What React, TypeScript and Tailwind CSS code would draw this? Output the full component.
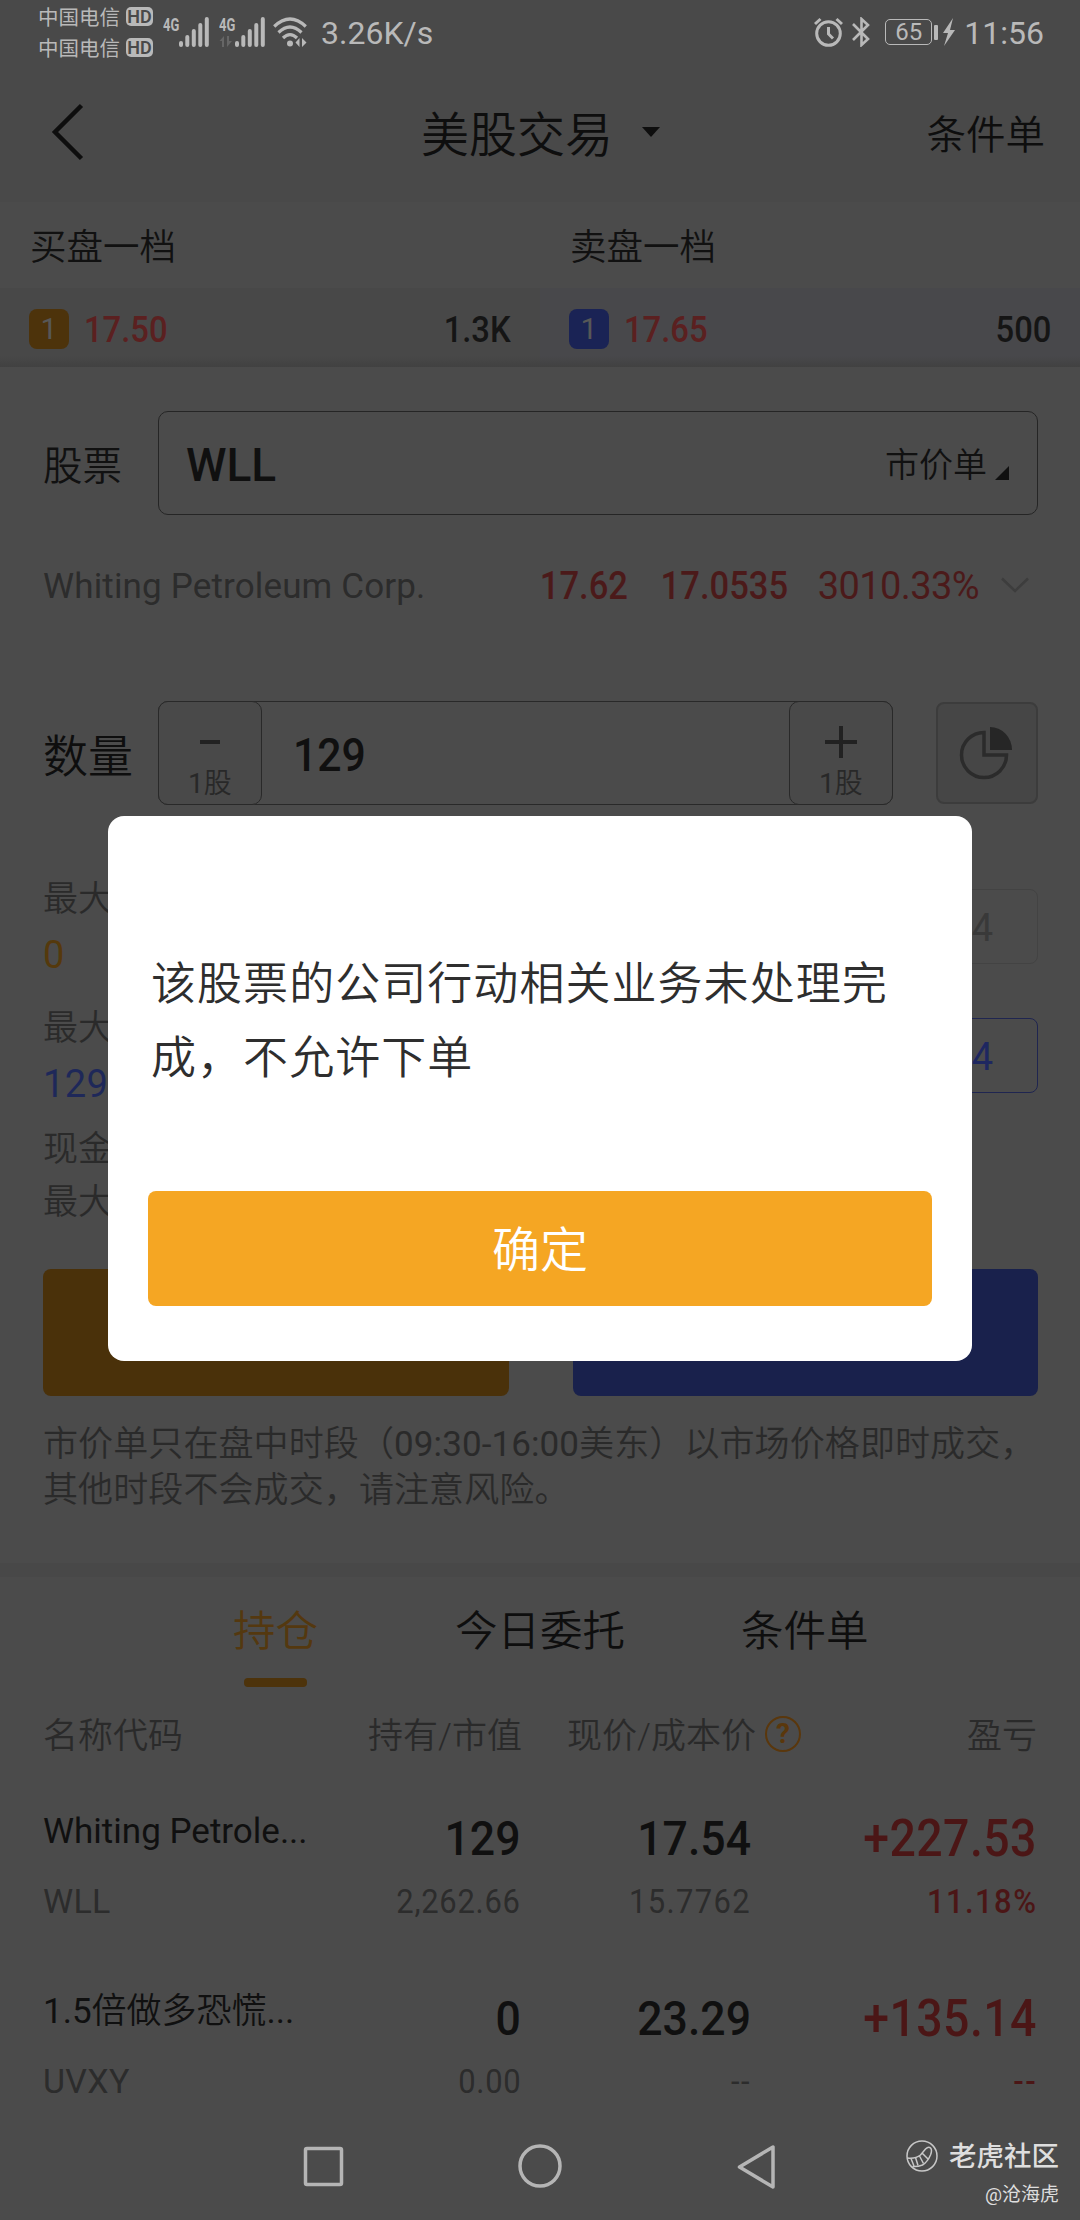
import type { ReactNode } from 'react';

interface Quote {
  title: string;
  price: string;
  size: string;
  badge: string;
  row: string;
}

interface Position {
  latin: string;
  name: string;
  code: string;
  amount: string;
  value: string;
  price: string;
  cost: string;
  profit: string;
  percent: string;
}

const quotes: Quote[] = [
  { title: '买盘一档', price: '17.50', size: '1.3K', badge: 'bg-[#4d330b]', row: 'bg-[#484848]' },
  { title: '卖盘一档', price: '17.65', size: '500', badge: 'bg-[#1a2355]', row: 'bg-[#48484b]' },
];

const positions: Position[] = [
  {
    latin: 'Whiting Petrole',
    name: '',
    code: 'WLL',
    amount: '129',
    value: '2,262.66',
    price: '17.54',
    cost: '15.7762',
    profit: '+227.53',
    percent: '11.18%',
  },
  {
    latin: '1.5',
    name: '倍做多恐慌',
    code: 'UVXY',
    amount: '0',
    value: '0.00',
    price: '23.29',
    cost: '--',
    profit: '+135.14',
    percent: '--',
  },
];

// condensed digits, anchored on the left or on the right
const Num = ({ children, right, className = '' }: { children: ReactNode; right?: boolean; className?: string }) => (
  <span className={`inline-block whitespace-nowrap scale-x-[0.91] ${right ? 'origin-right' : 'origin-left'} ${className}`}>
    {children}
  </span>
);

const Carrier = () => (
  <div className="flex h-[31px] items-center gap-[6px]">
    <span className="pt-[3px] text-[20.5px] leading-none">中国电信</span>
    <span className="flex h-[19px] w-[27px] items-center justify-center rounded-[5px] bg-[#b9b9b9] text-[18px] leading-none font-semibold text-[#494949]">
      HD
    </span>
  </div>
);

const Signal = ({ data }: { data?: boolean }) => (
  <div className="relative h-[30px] w-[46px]">
    <span className="absolute top-0 left-0 origin-left scale-x-[0.72] text-[18px] leading-[15px] font-bold">4G</span>
    <svg className="absolute inset-0" width="46" height="30" viewBox="0 0 46 30" fill="#b9b9b9">
      <rect x="16" y="24" width="4" height="6" rx="2" />
      <rect x="22.3" y="18" width="4" height="12" rx="2" />
      <rect x="28.8" y="12" width="4" height="18" rx="2" />
      <rect x="35.3" y="6" width="4" height="24" rx="2" />
      <rect x="41.8" y="0" width="4" height="30" rx="2" />
      {data && (
        <g fill="#666">
          <path d="M5 19v11H3v-6H0.500z" />
          <path d="M8 19v11l5-6h-3v-5z" />
        </g>
      )}
    </svg>
  </div>
);

const StatusBar = () => (
  <div className="flex h-[64px] items-center justify-between pr-[37px] pl-[38px] font-normal text-[#b9b9b9]">
    <div className="flex items-center">
      <div className="mr-[10px] flex flex-col">
        <Carrier />
        <Carrier />
      </div>
      <div className="mr-[10px]">
        <Signal />
      </div>
      <div className="mr-[8px]">
        <Signal data />
      </div>
      <svg className="mr-[14px]" width="34" height="30" viewBox="0 0 34 30" fill="none" stroke="#b9b9b9" strokeWidth="3.2">
        <path d="M1.200 9.500Q17-5.500 32.800 9.500" />
        <path d="M5.500 15.500Q17 4.500 28.500 15.500" />
        <path d="M10 21Q17 14 24 21" />
        <circle cx="17" cy="26.500" r="3" fill="#b9b9b9" stroke="none" />
        <path d="M26.500 21v9l-4-4.500zM29 21v9l4.500-4.500z" fill="#b9b9b9" stroke="none" />
      </svg>
      <span className="pt-px text-[32px] leading-none">3.26K/s</span>
    </div>
    <div className="flex items-center">
      <svg className="mr-[9px]" width="29" height="30" viewBox="0 0 29 30" fill="none" stroke="#b9b9b9" strokeWidth="3">
        <circle cx="14.500" cy="16.500" r="11.800" />
        <path d="M14.500 10v7l4.500 4.500" />
        <path d="M1 7l5.500-5M28 7l-5.500-5" />
      </svg>
      <svg className="mr-[14px]" width="19" height="30" viewBox="0 0 19 30" fill="none" stroke="#b9b9b9" strokeWidth="2.6">
        <path d="M1 7l15 15-6.500 6V2L16 8 1 23" />
      </svg>
      <div className="flex h-[26px] w-[47px] items-center justify-center rounded-[5px] border-[1.5px] border-[#b9b9b9] text-[24px] leading-none">
        65
      </div>
      <div className="mr-[5px] ml-[2px] h-[15px] w-[4px] rounded-[1px] bg-[#b9b9b9]" />
      <svg className="mr-[9px]" width="12" height="28" viewBox="0 0 12 28" fill="#b9b9b9">
        <path d="M10 0L0 15h5L1 28l11-16H7z" />
      </svg>
      <span className="-mr-px pt-px text-[32px] leading-none">11:56</span>
    </div>
  </div>
);

const Header = () => (
  <div className="grid h-[138px] grid-cols-3 items-center text-[#0e0e0e]">
    <svg className="-mt-[2px] ml-[51px]" width="33" height="58" viewBox="0 0 33 58" fill="none" stroke="#0e0e0e" strokeWidth="4.500">
      <path d="M30.500 2.500L4 29l26.500 26.500" />
    </svg>
    <div className="flex items-center pl-[61px]">
      <span className="pt-[5px] text-[48px] leading-none whitespace-nowrap">美股交易</span>
      <svg className="-mt-[3px] ml-[29px] shrink-0" width="18" height="10" viewBox="0 0 18 10" fill="#0e0e0e">
        <path d="M0 0h18L9 10z" />
      </svg>
    </div>
    <span className="pt-[5px] pr-[35px] text-right text-[39.500px] leading-none">条件单</span>
  </div>
);

const Quotes = () => (
  <div className="relative grid grid-cols-2">
    {quotes.map(q => (
      <div key={q.title}>
        <div className="flex h-[86px] items-center pt-[7px] pl-[30px] text-[36.500px] leading-none text-[#111]">{q.title}</div>
        <div className={`flex h-[79px] items-start pt-[21px] pr-[29px] pl-[29px] text-[36px] leading-[42px] font-medium ${q.row}`}>
          <span className={`flex h-[40px] w-[40px] items-center justify-center rounded-[8px] text-[30px] font-normal text-[#575757] ${q.badge}`}>
            1
          </span>
          <Num className="ml-[15px] text-[#5b2020]">{q.price}</Num>
          <Num right className="ml-auto text-[#151515]">
            {q.size}
          </Num>
        </div>
      </div>
    ))}
    <div className="absolute inset-x-0 bottom-0 h-[11px] bg-linear-to-b from-transparent to-[#414141]" />
  </div>
);

const StockRow = () => (
  <div className="mt-[44px] flex h-[104px] items-center pr-[42px] pl-[43px]">
    <span className="w-[115px] pt-[8px] text-[39.500px] leading-none text-[#111]">股票</span>
    <div className="flex h-full flex-1 items-center rounded-[10px] border border-[#252525] pr-[28px] pl-[27px]">
      <span className="pt-[3px] text-[46px] leading-none font-medium text-[#101010]">WLL</span>
      <span className="ml-auto pt-[4px] text-[34px] leading-none text-[#111]">市价单</span>
      <svg className="mt-[20px] ml-[8px]" width="14" height="14" viewBox="0 0 14 14" fill="#101010">
        <path d="M14 0v14H0z" />
      </svg>
    </div>
  </div>
);

const NameRow = () => (
  <div className="flex h-[142px] items-center pr-[51px] pl-[43px] font-normal text-[#4b1a1a]">
    <span className="text-[35px] leading-none tracking-[0.150px] whitespace-nowrap text-[#2c2c2c]">Whiting Petroleum Corp.</span>
    <div className="ml-auto flex items-center text-[38px] leading-none">
      <Num right className="font-medium">
        17.62
      </Num>
      <Num right className="ml-[20px] font-medium">
        17.0535
      </Num>
      <span className="ml-[30px] tracking-[-0.6px]">3010.33%</span>
      <svg className="-mt-[3px] ml-[22px]" width="28" height="16" viewBox="0 0 28 16" fill="none" stroke="#3d3d3d" strokeWidth="2.500">
        <path d="M1 1.500l13 12.500 13-12.500" />
      </svg>
    </div>
  </div>
);

const Step = ({ plus }: { plus?: boolean }) => (
  <div className="-m-px flex h-[104px] w-[104px] flex-col items-center rounded-[10px] border border-[#292929] bg-[#494949] pt-[23px] text-[#282828]">
    <svg width="34" height="34" viewBox="0 0 34 34" stroke="#222" strokeWidth="4">
      {plus ? <path d="M1 17h32M17 1v32" /> : <path d="M7 17h20" />}
    </svg>
    <span className="mt-[11px] text-[28px] leading-none">
      <span className="font-normal">1</span>股
    </span>
  </div>
);

const QuantityRow = () => (
  <div className="mt-[44px] flex h-[104px] items-center pr-[42px] pl-[43px]">
    <span className="w-[115px] pt-[8px] text-[45px] leading-none whitespace-nowrap text-[#0e0e0e]">数量</span>
    <div className="flex h-full w-[735px] items-center justify-between rounded-[10px] border border-[#292929]">
      <Step />
      <Num className="mr-auto ml-[32px] pt-[2px] text-[47px] leading-none font-medium text-[#101010]">129</Num>
      <Step plus />
    </div>
    <div className="ml-auto flex h-[102px] w-[102px] items-center justify-center rounded-[8px] border-2 border-[#3c3c3c] bg-[#464646]">
      <svg className="-mt-[3px]" width="56" height="56" viewBox="0 0 56 56" fill="none">
        <path d="M25 8.500A22.500 22.500 0 1 0 47.500 31H25z" stroke="#2b2b2b" strokeWidth="3.500" />
        <path d="M31 3a22 23 0 0 1 22 23H31z" fill="#262626" />
      </svg>
    </div>
  </div>
);

const LimitRow = ({ value, color, box }: { value: string; color: string; box: string }) => (
  <div className="flex h-[129px] items-start justify-between">
    <div>
      <div className="h-[50px] text-[35px] leading-[54px]">最大</div>
      <div className={`h-[64px] text-[38px] leading-[65px] font-normal tracking-[0.4px] ${color}`}>{value}</div>
    </div>
    <div className={`mt-4 flex h-[75px] w-[250px] items-center justify-end rounded-[8px] border pt-[3px] pr-[44px] text-[38px] leading-none font-normal ${box}`}>
      4
    </div>
  </div>
);

const Limits = () => (
  <div className="mt-[68px] pr-[42px] pl-[43px] text-[35px] text-[#2a2a2a]">
    <LimitRow value="0" color="text-[#55390c]" box="border-[#434343] text-[#393939]" />
    <LimitRow value="129" color="text-[#1e2859]" box="border-[#1f2550] text-[#1e2760]" />
    <div className="h-[34px] leading-[38px]">现金</div>
    <div className="h-[72px] leading-[76px]">最大</div>
  </div>
);

const Positions = () => (
  <div>
    <div className="flex h-[110px] pt-[31px] text-[42.500px] leading-[48px] text-[#0e0e0e]">
      <div className="relative ml-[233px] text-[#54380f]">
        持仓
        <div className="absolute top-[70px] left-[11px] h-[9px] w-[63px] rounded-[4px] bg-[#4d330b]" />
      </div>
      <div className="ml-[137px]">今日委托</div>
      <div className="ml-[116px]">条件单</div>
    </div>
    <div className="grid h-[83px] grid-cols-[231px_248px_279px_236px] items-center pt-[14px] pl-[43px] text-[35px] leading-[38px] text-[#2a2a2a]">
      <span className="pt-[2px]">名称代码</span>
      <span className="pt-[2px] text-right">持有/市值</span>
      <span className="flex items-center justify-end">
        <span className="pt-[2px]">现价/成本价</span>
        <span className="-mt-[3px] ml-[9px] flex h-[36px] w-[36px] items-center justify-center rounded-full border-2 border-[#5a370c] text-[28px] leading-none font-bold text-[#5a370c]">
          ?
        </span>
      </span>
      <span className="pt-[2px] text-right">盈亏</span>
    </div>
    {positions.map(p => (
      <div key={p.code} className="grid h-[180px] grid-cols-[271px_207px_230px_286px] pl-[43px] text-[34px] text-[#2c2c2c]">
        <div>
          <div className="h-[96px] pt-[40px] text-[35px] leading-[43px] whitespace-nowrap text-[#101010]">
            <span className="font-normal">{p.latin}</span>
            {p.name}
            <span className="font-normal">...</span>
          </div>
          <div className="leading-[70px] font-normal tracking-[0.300px]">{p.code}</div>
        </div>
        <div className="text-right font-medium">
          <div className="h-[96px] pt-[48px] text-[49px] leading-[42px] text-[#101010]">
            <Num right>{p.amount}</Num>
          </div>
          <div className="leading-[70px] font-normal tracking-[0.8px]">
            <Num right>{p.value}</Num>
          </div>
        </div>
        <div className="text-right font-medium">
          <div className="h-[96px] pt-[48px] text-[49px] leading-[42px] text-[#101010]">
            <Num right>{p.price}</Num>
          </div>
          <div className="leading-[70px] font-normal tracking-[1.500px]">
            <Num right>{p.cost}</Num>
          </div>
        </div>
        <div className="text-right font-medium text-[#4b1616]">
          <div className="h-[96px] pt-[48px] text-[51px] leading-[42px] tracking-[0.500px]">
            <Num right>{p.profit}</Num>
          </div>
          <div className="leading-[70px] tracking-[1.600px]">
            <Num right>{p.percent}</Num>
          </div>
        </div>
      </div>
    ))}
  </div>
);

const NavBar = () => (
  <div className="flex h-[90px] pt-[14px] pl-[302px]">
    <svg width="43" height="44" viewBox="0 0 43 44" fill="none" stroke="#b5b5b5" strokeWidth="3.500">
      <rect x="3.500" y="4.500" width="36" height="36" rx="1.500" />
    </svg>
    <svg className="ml-[173px]" width="44" height="44" viewBox="0 0 44 44" fill="none" stroke="#b5b5b5" strokeWidth="3.500">
      <circle cx="22" cy="22" r="20" />
    </svg>
    <svg className="ml-[174px]" width="40" height="46" viewBox="0 0 40 46" fill="none" stroke="#b5b5b5" strokeWidth="3.500" strokeLinejoin="round">
      <path d="M37 3v40L3.500 23z" />
    </svg>
  </div>
);

const Watermark = () => (
  <div className="absolute right-[21px] bottom-[9px] flex flex-col items-end font-normal text-[#dedede]">
    <div className="flex items-center gap-[11px]">
      <svg className="-mt-[3px]" width="32" height="32" viewBox="0 0 32 32" fill="none" stroke="#c8c8c8" strokeWidth="1.500">
        <circle cx="16" cy="16" r="15" />
        <path d="M1.500 18q8 1 13-3l5-6q3-3 5-1 2 2 0 7-3 7-8 10-5 2-10 1.500" />
        <path d="M5 18.500l3 7.500M9.500 17.500l2.500 8M13.500 16l4 7.500M16 13l6 6" />
      </svg>
      <span className="text-[27.500px] leading-[40px] font-medium">老虎社区</span>
    </div>
    <span className="mt-[2px] text-[19px] leading-[32px]">@沧海虎</span>
  </div>
);

const Modal = () => (
  <div className="absolute top-[816px] left-[108px] flex h-[545px] w-[864px] flex-col rounded-[16px] bg-white px-[40px] pt-[132px]">
    <p className="h-[243px] pl-[3px] text-[45px] leading-[74px] tracking-[1.050px] whitespace-nowrap text-[#2e2e2e]">
      该股票的公司行动相关业务未处理完
      <br />
      成，不允许下单
    </p>
    <button className="h-[115px] rounded-[8px] bg-[#f5a623] pt-[5px] text-[48px] leading-none text-white">确定</button>
  </div>
);

export default function App() {
  return (
    <div
      lang="zh-CN"
      className="relative h-[2220px] w-[1080px] overflow-hidden bg-[#4b4b4b] font-['Roboto','Noto_Sans_CJK_SC',sans-serif] font-[350]"
    >
      <div className="bg-[#494949]">
        <StatusBar />
        <Header />
      </div>
      <Quotes />
      <StockRow />
      <NameRow />
      <QuantityRow />
      <Limits />
      <div className="mt-[32px] flex justify-between pr-[42px] pl-[43px]">
        <div className="h-[127px] w-[466px] rounded-[8px] bg-[#4a310a]" />
        <div className="h-[127px] w-[465px] rounded-[8px] bg-[#19214c]" />
      </div>
      <p className="mt-[26px] pl-[43px] text-[35px] leading-[46px] tracking-[0.100px] whitespace-nowrap text-[#2a2a2a]">
        市价单只在盘中时段（<span className="font-normal">09:30-16:00</span>美东）以市场价格即时成交，
        <br />
        其他时段不会成交，请注意风险。
      </p>
      <div className="mt-[49px] h-[14px] bg-[#484848]" />
      <Positions />
      <NavBar />
      <Watermark />
      <Modal />
    </div>
  );
}
